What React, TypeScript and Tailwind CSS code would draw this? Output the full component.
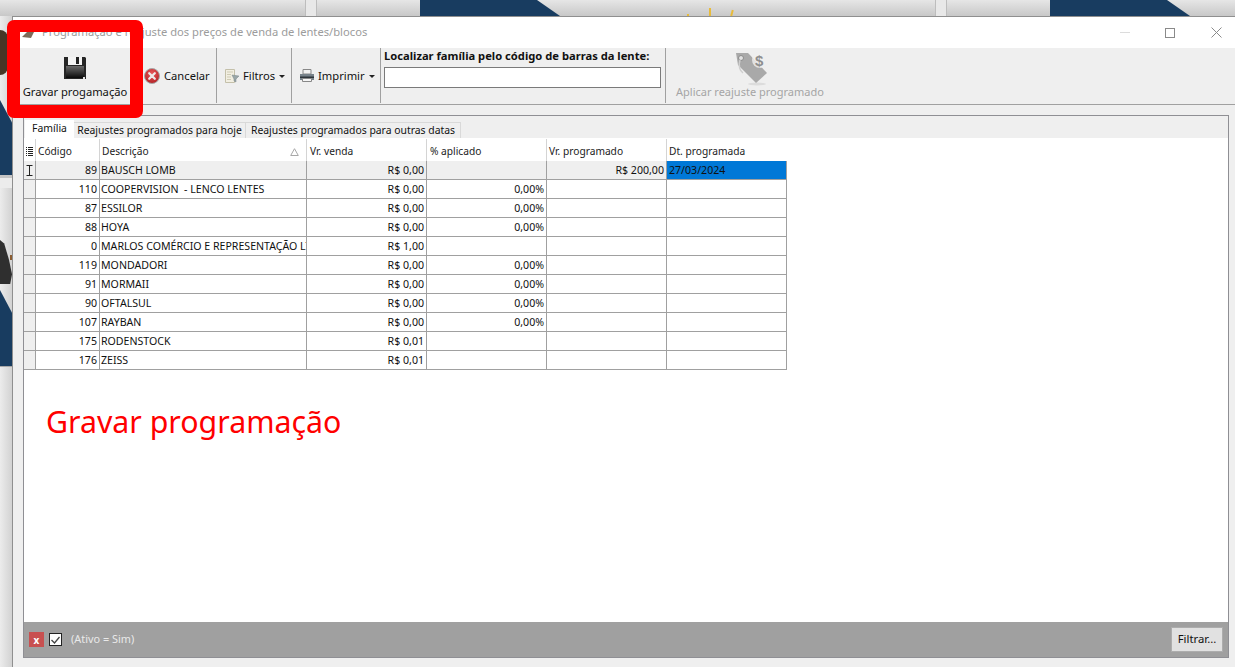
import React from "react";

const ui = "font-['Noto_Sans','Liberation_Sans',sans-serif]";

const rows: [string, string, string, string, string, string][] = [
  ["89", "BAUSCH LOMB", "R$ 0,00", "", "R$ 200,00", "27/03/2024"],
  ["110", "COOPERVISION  - LENCO LENTES", "R$ 0,00", "0,00%", "", ""],
  ["87", "ESSILOR", "R$ 0,00", "0,00%", "", ""],
  ["88", "HOYA", "R$ 0,00", "0,00%", "", ""],
  ["0", "MARLOS COMÉRCIO E REPRESENTAÇÃO LTDA", "R$ 1,00", "", "", ""],
  ["119", "MONDADORI", "R$ 0,00", "0,00%", "", ""],
  ["91", "MORMAII", "R$ 0,00", "0,00%", "", ""],
  ["90", "OFTALSUL", "R$ 0,00", "0,00%", "", ""],
  ["107", "RAYBAN", "R$ 0,00", "0,00%", "", ""],
  ["175", "RODENSTOCK", "R$ 0,01", "", "", ""],
  ["176", "ZEISS", "R$ 0,01", "", "", ""],
];

const Floppy = () => (
  <svg width="22" height="24" viewBox="0 0 22 24">
    <defs>
      <linearGradient id="fl" x1="0" y1="0" x2="0" y2="1">
        <stop offset="0" stopColor="#6a6a6a" />
        <stop offset="0.5" stopColor="#3a3a3a" />
        <stop offset="1" stopColor="#0a0a0a" />
      </linearGradient>
    </defs>
    <path d="M0 1h21l1 1v21H0z" fill="#262626" />
    <path d="M4 1h14v8H4z" fill="#f4f4f4" />
    <path d="M12 1h3v7h-3z" fill="#222" />
    <path d="M2 10h18v12H2z" fill="url(#fl)" />
    <path d="M19 21h2v2h-2z" fill="#e5e5e5" />
  </svg>
);

const CancelIcon = () => (
  <svg width="16" height="16" viewBox="0 0 16 16">
    <defs>
      <radialGradient id="cn" cx="0.5" cy="0.35" r="0.7">
        <stop offset="0" stopColor="#e8585a" />
        <stop offset="1" stopColor="#b01e22" />
      </radialGradient>
    </defs>
    <circle cx="8" cy="8" r="7.5" fill="url(#cn)" stroke="#a8a8a8" strokeWidth="1" />
    <path d="M5.2 5.2l5.6 5.6M10.8 5.2l-5.6 5.6" stroke="#eeeaea" strokeWidth="2.2" strokeLinecap="round" />
  </svg>
);

const FilterIcon = () => (
  <svg width="16" height="16" viewBox="0 0 16 16">
    <path d="M1.5 1.5h9v13h-9z" fill="#f2efe2" stroke="#c4c0aa" />
    <path d="M3 4h6M3 6.5h4M3 9h4M3 11.5h4" stroke="#cfcbb5" />
    <path d="M8 7l7 1-3 3v3l-2-1v-2z" fill="#9aa7a9" stroke="#7a8688" strokeWidth="0.5" />
  </svg>
);

const PrintIcon = () => (
  <svg width="16" height="16" viewBox="0 0 16 16">
    <path d="M4 1.5h8V6H4z" fill="#f2f2f2" stroke="#888" />
    <path d="M1 6h14v6H1z" fill="#77828a" />
    <path d="M1 8.5h14v1.5H1z" fill="#2e353b" />
    <path d="M3.5 10.5h9v3h-9z" fill="#f5f5f5" stroke="#888" />
  </svg>
);

const TagIcon = () => (
  <svg width="35" height="36" viewBox="0 0 35 36">
    <ellipse cx="23" cy="33" rx="9" ry="1.5" fill="#dcdcdc" />
    <path d="M2 2h12l19 20-11 10L4 14z" fill="#a9a9a9" />
    <circle cx="7" cy="7" r="2.5" fill="#e2e2e2" stroke="#8b8b8b" />
    <path d="M6 9c-2 6 0 11 3 13" fill="none" stroke="#cfcfcf" strokeWidth="1.5" />
    <circle cx="26" cy="9" r="8" fill="#efefef" opacity="0.8" />
    <text x="21" y="15" fontSize="15" fontWeight="700" fontFamily="Liberation Sans" fill="#8f8f8f">$</text>
  </svg>
);

const Caret = () => <span className="ml-1 inline-block h-0 w-0 border-x-[3px] border-t-[3px] border-x-transparent border-t-[#222]" />;

const Sep = () => <div className="w-px shrink-0 self-stretch bg-[#a0a0a0]" />;

const gridCols = "grid w-[763px] grid-cols-[12px_64px_207px_120px_120px_120px_120px]";
const Navy = "absolute left-0 w-[12px] bg-[#183c60] [clip-path:polygon(0_0,100%_30%,100%_100%,0_100%)]";

export default function App() {
  return (
    <div className={`relative h-[667px] w-[1235px] overflow-hidden bg-[#e4e4e4] text-[10.6px] text-[#111] ${ui}`}>
      {/* desktop behind the window */}
      <div className="absolute left-0 top-0 h-[16px] w-full bg-gradient-to-b from-[#e6e6e6] to-[#c8c8c8]">
        <div className="absolute left-[305px] top-0 h-full w-[12px] border-x border-[#bdbdbd] bg-[#e8e8e8]" />
        <div className="absolute left-[420px] top-0 h-full w-[140px] bg-[#183c60] [clip-path:polygon(0_0,117px_0,100%_100%,0_100%)]" />
        <div className="absolute left-[935px] top-0 h-full w-[12px] border-x border-[#bdbdbd] bg-[#e8e8e8]" />
        <div className="absolute left-[1050px] top-0 h-full w-[140px] bg-[#183c60] [clip-path:polygon(0_0,117px_0,100%_100%,0_100%)]" />
        <div className="absolute left-[709px] top-[8px] h-[8px] w-[2px] bg-[#e8bb3a]" />
        <div className="absolute left-[731px] top-[10px] h-[6px] w-[2px] rotate-[15deg] bg-[#e8bb3a]" />
        <div className="absolute left-[687px] top-[14px] h-[2px] w-[2px] bg-[#e8bb3a]" />
      </div>
      <div className="absolute left-0 top-[16px] h-[651px] w-[12px] bg-gradient-to-r from-[#ececec] to-[#d2d2d2]">
        <div className="absolute left-0 top-[14px] h-[45px] w-[8px] rounded-r-full bg-[#463626]" />
        <div className={`${Navy} top-[84px] h-[75px]`} />
        <div className="absolute left-0 top-[159px] h-[3px] w-[12px] bg-[#c4c4c4]" />
        <div className="absolute left-0 top-[162px] h-[10px] w-[12px] bg-[#ececec]" />
        <div className="absolute left-0 top-[224px] h-[44px] w-[12px] bg-[#2f2f2f] [clip-path:polygon(0_0,35%_8%,75%_45%,100%_78%,85%_100%,0_100%)]" />
        <div className="absolute left-[10px] top-[239px] h-[5px] w-[2px] bg-[#8a5c30]" />
        <div className={`${Navy} top-[274px] h-[76px]`} />
        <div className="absolute left-0 top-[350px] h-px w-[12px] bg-[#a8a8a8]" />
      </div>

      {/* window */}
      <div className="absolute left-[12px] top-[16px] flex h-[651px] w-[1223px] flex-col border-l border-t border-[#8f8f8f] bg-[#efefef]">
        <div className="flex h-[31px] shrink-0 items-center bg-white pl-[8px] text-[11.2px] text-[#9c9c9c]">
          <svg width="14" height="12" viewBox="0 0 14 12" className="mr-[7px] shrink-0">
            <path d="M1 10l7-7 5 2-3 6z" fill="#7d6a58" />
          </svg>
          <span>Programação e reajuste dos preços de venda de lentes/blocos</span>
          <div className="ml-auto flex h-full items-center">
            <div className="mr-[35px] h-px w-[10px] bg-[#dcdcdc]" />
            <div className="mr-[36px] h-[10px] w-[10px] border border-[#8a8a8a]" />
            <svg width="11" height="11" viewBox="0 0 11 11" className="mr-[13px]">
              <path d="M0.5 0.5l10 10M10.5 0.5l-10 10" stroke="#8a8a8a" fill="none" />
            </svg>
          </div>
        </div>

        <div className="flex h-[57px] shrink-0 items-stretch border-b border-[#a0a0a0] pb-px pl-[7px] text-[11.2px]">
          <div className="flex w-[110px] shrink-0 flex-col items-center pt-[8px]">
            <Floppy />
            <span className="mt-[4px] whitespace-nowrap">Gravar progamação</span>
          </div>
          <div className="ml-[14px] flex w-[72px] shrink-0 items-center gap-[4px] pt-px">
            <CancelIcon />
            <span>Cancelar</span>
          </div>
          <Sep />
          <div className="flex w-[74px] shrink-0 items-center pl-[7px] pt-px">
            <FilterIcon />
            <span className="ml-[3px]">Filtros</span>
            <Caret />
          </div>
          <Sep />
          <div className="flex w-[88px] shrink-0 items-center pl-[7px] pt-px">
            <PrintIcon />
            <span className="ml-[3px]">Imprimir</span>
            <Caret />
          </div>
          <Sep />
          <div className="flex w-[284px] shrink-0 flex-col pl-[3px]">
            <span className="whitespace-nowrap font-bold leading-[16px]">Localizar família pelo código de barras da lente:</span>
            <div className="mt-[3px] h-[21px] w-[277px] border border-[#7a7a7a] bg-white" />
          </div>
          <Sep />
          <div className="flex flex-1 flex-col items-start pl-[10px]">
            <div className="ml-[58px] mt-[3px] h-[34px]"><TagIcon /></div>
            <span className="mt-[-1px] whitespace-nowrap text-[11px] text-[#a5a5a5]">Aplicar reajuste programado</span>
          </div>
        </div>

        <div className="mb-[9px] ml-[10px] mr-[6px] mt-[10px] flex flex-1 flex-col border border-[#8f8f94] bg-white">
          <div className="flex h-[22px] shrink-0 items-end bg-[#efefef] pl-[1px] text-[10.4px]">
            <div className="flex h-[18px] w-[49px] shrink-0 items-center justify-center bg-white pb-[1px]">Família</div>
            <div className="flex h-[16px] w-[172px] shrink-0 items-center justify-center whitespace-nowrap border-r border-t border-[#d9d9d9]">Reajustes programados para hoje</div>
            <div className="flex h-[16px] w-[215px] shrink-0 items-center justify-center whitespace-nowrap border-r border-t border-[#d9d9d9]">Reajustes programados para outras datas</div>
          </div>

          <div className="flex flex-1 flex-col bg-white pt-[1px]">
            <div className={`${gridCols} h-[22px] items-center text-[10.2px] text-[#222]`}>
              <div className="flex h-full items-center justify-center border-r border-[#d4d4d4] pt-[3px]">
                <svg width="7" height="9" viewBox="0 0 7 9"><path d="M0 .5h1M2 .5h5M0 2.5h1M2 2.5h5M0 4.5h1M2 4.5h5M0 6.5h1M2 6.5h5M0 8.5h1M2 8.5h5" stroke="#222" /></svg>
              </div>
              <div className="flex h-full items-center border-r border-[#d4d4d4] pl-[2px] pt-[4px]">Código</div>
              <div className="flex h-full items-center justify-between border-r border-[#d4d4d4] pl-[2px] pr-[7px] pt-[4px]">
                <span>Descrição</span>
                <svg width="9" height="8" viewBox="0 0 9 8"><path d="M4.5.7L8.3 7.5H.7z" fill="none" stroke="#a8a8a8" /></svg>
              </div>
              <div className="flex h-full items-center border-r border-[#d4d4d4] pl-[3px] pt-[4px]">Vr. venda</div>
              <div className="flex h-full items-center border-r border-[#d4d4d4] pl-[3px] pt-[4px]">% aplicado</div>
              <div className="flex h-full items-center border-r border-[#d4d4d4] pl-[2px] pt-[4px]">Vr. programado</div>
              <div className="flex h-full items-center pl-[2px] pt-[4px]">Dt. programada</div>
            </div>

            {rows.map((r, i) => {
              const active = i === 0;
              const cell = `flex h-[19px] items-center overflow-hidden whitespace-pre border-b border-r border-[#a0a0a0] pt-px ${active ? "bg-[#efefef]" : "bg-white"}`;
              return (
                <div key={r[0]} className={gridCols}>
                  <div className="flex h-[19px] items-center justify-center border-b border-r border-[#a0a0a0] bg-[#efefef]">
                    {active && (
                      <svg width="7" height="11" viewBox="0 0 7 11"><path d="M.5.5h6M.5 10.5h6M3.5.5v10" stroke="#222" fill="none" /></svg>
                    )}
                  </div>
                  <div className={`${cell} justify-end pr-[2px]`}>{r[0]}</div>
                  <div className={`${cell} pl-[1px]`}>{r[1]}</div>
                  <div className={`${cell} justify-end pr-[2px]`}>{r[2]}</div>
                  <div className={`${cell} justify-end pr-[2px]`}>{r[3]}</div>
                  <div className={`${cell} justify-end pr-[2px]`}>{r[4]}</div>
                  <div className={`${cell} pl-[2px] ${active ? "!bg-[#0078d7]" : ""}`}>{r[5]}</div>
                </div>
              );
            })}

            <div className="ml-[22px] mt-[31px] text-[30.3px] leading-[42px] text-[#ff0000]">Gravar programação</div>
          </div>

          <div className="flex h-[35px] shrink-0 items-center bg-[#a0a0a0] pl-[5px] pr-[5px]">
            <div className="flex h-[15px] w-[15px] items-center justify-center bg-[#c85050] text-[10px] font-bold leading-none text-white">x</div>
            <div className="ml-[5px] flex h-[13px] w-[13px] items-center justify-center border border-[#222] bg-white">
              <svg width="9" height="8" viewBox="0 0 9 8"><path d="M.5 4l3 3 5-6" fill="none" stroke="#444" strokeWidth="1.3" /></svg>
            </div>
            <span className="ml-[9px] text-[10.9px] text-[#e9e9e9]">(Ativo = Sim)</span>
            <div className="ml-auto flex h-[25px] w-[52px] items-center justify-center border border-[#adadad] bg-[#e1e1e1] text-[11.3px]">Filtrar...</div>
          </div>
        </div>
      </div>

      {/* red annotation frame over the window */}
      <div className="absolute left-[7px] top-[20px] h-[98px] w-[136px] rounded-[7px] border-[13px] border-t-[12px] border-[#ff0000]" />
    </div>
  );
}
